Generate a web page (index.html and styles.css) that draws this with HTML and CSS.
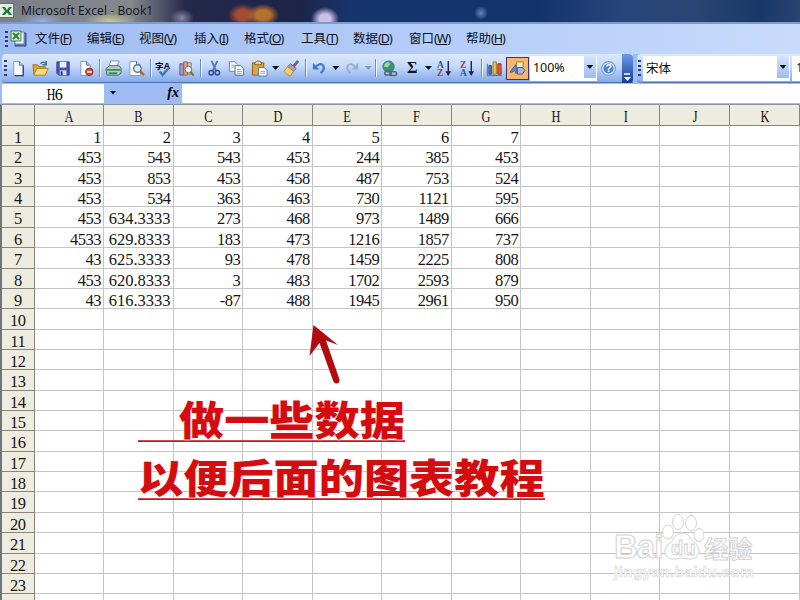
FILE: index.html
```
<!DOCTYPE html>
<html lang="zh-CN">
<head>
  <meta charset="UTF-8">
  <title>Microsoft Excel - Book1</title>
  <link rel="stylesheet" href="styles.css">
</head>
<body>
  <div class="window">
    <div class="titlebar">
      <svg class="app-icon" width="14" height="15" viewBox="0 0 14 15"><rect x="-2" y=".5" width="15.5" height="14" fill="#e4eee0" stroke="#4f8250"/><path d="M2 4h3l2 3 2-3h3L9 8l3 4H9L7 9.500l-2 2.500H2l3-4z" fill="#24773a"/></svg>
      <span>Microsoft Excel - Book1</span>
    </div>

    <div class="menubar">
      <i class="grip"></i>
      <svg width="18" height="18" viewBox="0 0 18 18"><path d="M6 3h10v13H5z" fill="#5b7fb5" stroke="#284a83"/><path d="M5 2h9v12H5z" fill="#fff" stroke="#6380ad"/><path d="M1 1h10v10H1z" fill="#d8ecd4" stroke="#42774a"/><path d="M3 3l6 6M9 3L3 9" stroke="#25803a" stroke-width="2"/></svg>
      <div class="menus">
        <span>文件<b>(<u>F</u>)</b></span>
        <span>编辑<b>(<u>E</u>)</b></span>
        <span>视图<b>(<u>V</u>)</b></span>
        <span>插入<b>(<u>I</u>)</b></span>
        <span>格式<b>(<u>O</u>)</b></span>
        <span>工具<b>(<u>T</u>)</b></span>
        <span>数据<b>(<u>D</u>)</b></span>
        <span>窗口<b>(<u>W</u>)</b></span>
        <span>帮助<b>(<u>H</u>)</b></span>
      </div>
    </div>

    <div class="toolbars">
      <div class="toolbar standard">
        <i class="grip"></i>
        <!-- new, open, save, permission -->
        <span class="btn"><svg viewBox="0 0 18 18"><path d="M4 1.500h6l4 4v11H4z" fill="#fff" stroke="#7d93bd"/><path d="M14 5.500v11H5" fill="none" stroke="#27406f" stroke-width="1.300"/><path d="M10 1.500v4h4" fill="#c5d3ea" stroke="#50688f"/></svg></span>
        <span class="btn"><svg viewBox="0 0 18 18"><path d="M1 5h5l1 2h7v8H2z" fill="#d9a63a" stroke="#9b7227"/><path d="M2 16l3-7h12l-3 7z" fill="#ffdc78" stroke="#b38428"/><path d="M9 4q3-3 6 0m0-3v4h-4" fill="none" stroke="#336fa5" stroke-width="1.500"/></svg></span>
        <span class="btn"><svg viewBox="0 0 18 18"><path d="M2 2h13v14H4l-2-2z" fill="#4854b5" stroke="#303986"/><path d="M5 2h7v6H5z" fill="#e9effb"/><path d="M5 11h7v5H5z" fill="#d7dced"/><path d="M6 12h2v4H6z" fill="#252d6a"/></svg></span>
        <span class="btn"><svg viewBox="0 0 18 18"><path d="M3 1.500h6l4 4v11H3z" fill="#fff" stroke="#7d93bd"/><path d="M9 1.500v4h4" fill="#c5d3ea" stroke="#50688f"/><circle cx="12" cy="12.500" r="4" fill="#d5452f" stroke="#a12d1d"/><path d="M9.500 12.500h5" stroke="#fff" stroke-width="2"/></svg></span>
        <i class="sep"></i>
        <!-- print, preview -->
        <span class="btn"><svg viewBox="0 0 18 18"><path d="M6 1h9l-3 7H4z" fill="#fff" stroke="#768bab"/><path d="M1 9l4-3h10l2 3v5l-3 2H2z" fill="#b7c9ca" stroke="#50665e"/><path d="M1.500 10.500h15M4 14h9" stroke="#3c9251" stroke-width="2"/></svg></span>
        <span class="btn"><svg viewBox="0 0 18 18"><path d="M2 1.500h7l4 4v11H2z" fill="#fff" stroke="#7d93bd"/><path d="M9 1.500v4h4" fill="#c5d3ea" stroke="#50688f"/><circle cx="10" cy="9" r="4" fill="#d7eef6" stroke="#5c7488" stroke-width="1.400"/><path d="M13 12l4 4" stroke="#a66a35" stroke-width="2.500"/></svg></span>
        <i class="sep"></i>
        <!-- spelling, research -->
        <span class="btn"><svg viewBox="0 0 18 18"><text x="0" y="9" class="glyph-zi">字</text><text x="9" y="10" class="glyph-a">A</text><path d="M5 12l3 4 6-7" fill="none" stroke="#3e78c5" stroke-width="2.500"/></svg></span>
        <span class="btn"><svg viewBox="0 0 18 18"><path d="M2 4h4v12H2z" fill="#a394c8" stroke="#63568e"/><path d="M6 2h4v14H6z" fill="#e2a06b" stroke="#8d6650"/><path d="M10 3h4v12h-4z" fill="#e0c7bc" stroke="#94756d"/><circle cx="11" cy="10" r="3.500" fill="#e8f5f8" stroke="#67727b"/><path d="M13.500 12.500l3 4" stroke="#94652e" stroke-width="2.200"/></svg></span>
        <i class="sep"></i>
        <!-- cut, copy, paste -->
        <span class="btn"><svg viewBox="0 0 18 18"><path d="M6 1l5 11M12 1L7 12" stroke="#5478af" stroke-width="2"/><circle cx="5.500" cy="13.500" r="2.300" fill="none" stroke="#294f92" stroke-width="1.600"/><circle cx="12" cy="13.500" r="2.300" fill="none" stroke="#294f92" stroke-width="1.600"/></svg></span>
        <span class="btn"><svg viewBox="0 0 18 18"><path d="M1.500 2h6l3 3v7h-9z" fill="#fff" stroke="#5e80bb"/><path d="M7.500 6h6l3 3v7h-9z" fill="#fff" stroke="#4569a9"/><path d="M3.500 5.500h4m-4 2h3m3 2.500h4m-4 2h5m-5 2h5" stroke="#7f9ed0"/></svg></span>
        <span class="btn"><svg viewBox="0 0 18 18"><path d="M1.500 3h12v13h-12z" fill="#e0a437" stroke="#89601c"/><path d="M4 3q3.500-4 7 0v2H4z" fill="#e8d59b" stroke="#78622d"/><path d="M8 8h6l3 3v6H8z" fill="#fff" stroke="#5875a7"/><path d="M10 12h5m-5 2h5" stroke="#7f9ed0"/></svg></span>
        <i class="drop"></i>
        <span class="btn"><svg viewBox="0 0 18 18"><path d="M16 1l-5 6" stroke="#705f88" stroke-width="3"/><path d="M8 4l6 5-3 3-6-5z" fill="#a5a3b6" stroke="#6d6970"/><path d="M5 7l6 5-3 5q-4-1-7-5z" fill="#f5ce64" stroke="#b48835"/></svg></span>
        <i class="sep"></i>
        <!-- undo, redo -->
        <span class="btn"><svg viewBox="0 0 18 18"><path d="M4 8q6-6 9-2 2 4-3 8" fill="none" stroke="#4279cd" stroke-width="2.400"/><path d="M2 3v7h7z" fill="#4279cd"/></svg></span>
        <i class="drop"></i>
        <span class="btn"><svg viewBox="0 0 18 18"><path d="M13 8Q7 2 4 6q-2 4 3 8" fill="none" stroke="#99afd0" stroke-width="2"/><path d="M15 3v7H8z" fill="#99afd0"/></svg></span>
        <i class="drop off"></i>
        <i class="sep"></i>
        <!-- hyperlink, sum, sort -->
        <span class="btn"><svg viewBox="0 0 18 18"><circle cx="8" cy="7" r="6" fill="#3c9170" stroke="#397c82"/><path d="M4 4q3-3 6 0l-3 4-4-1z" fill="#9ad8a1"/><g fill="none" stroke="#56657e" stroke-width="1.600"><rect x="4" y="12" width="7" height="4" rx="2"/><rect x="9.500" y="12.500" width="7" height="4" rx="2"/></g></svg></span>
        <span class="btn sigma">Σ</span>
        <i class="drop"></i>
        <span class="btn"><svg viewBox="0 0 18 18"><text x="1" y="8" class="sort a">A</text><text x="1" y="17" class="sort z">Z</text><path d="M13 1v14" stroke="#1c2440" stroke-width="1.500"/><path d="M10 12h6l-3 5z" fill="#1c2440"/></svg></span>
        <span class="btn"><svg viewBox="0 0 18 18"><text x="1" y="8" class="sort z">Z</text><text x="1" y="17" class="sort a">A</text><path d="M13 1v14" stroke="#1c2440" stroke-width="1.500"/><path d="M10 12h6l-3 5z" fill="#1c2440"/></svg></span>
        <i class="sep"></i>
        <!-- chart, drawing -->
        <span class="btn"><svg viewBox="0 0 18 18"><path d="M1.500 4v12.500H17" fill="none" stroke="#526999"/><path d="M3 6h3v9H3z" fill="#4b74bd" stroke="#30538d"/><path d="M7.500 2h3.500v13H7.500z" fill="#f3be40" stroke="#a87924"/><path d="M12.500 4H16v11h-3.500z" fill="#d65a3d" stroke="#9a3428"/></svg></span>
        <span class="btn active"><svg viewBox="0 0 18 18"><path d="M8 2h7v6H8z" fill="#e9e8bd" stroke="#8c8050"/><path d="M1 13l6-8 2 9H7l-1-3-3 2z" fill="#6d86c7" stroke="#465d97"/><path d="M9 8h5l3 3-3 4H9z" fill="#a3b4df" stroke="#505d8c"/></svg></span>
        <span class="combo zoom">100%<em><i class="drop"></i></em></span>
        <span class="btn help"><svg viewBox="0 0 18 18"><circle cx="9" cy="9" r="6.500" fill="#d8e8ff" stroke="#6f9bd6"/><circle cx="9" cy="9" r="4.800" fill="#4d84cf"/><text x="6.200" y="12.600" class="question">?</text></svg></span>
        <span class="more"><svg width="9" height="9" viewBox="0 0 9 9"><path d="M1 1h6" stroke="#fff" stroke-width="1.500"/><path d="M1 4h7L4.500 8z" fill="#fff"/></svg></span>
      </div>
      <div class="toolbar format">
        <i class="grip"></i>
        <span class="combo font">宋体<em><i class="drop"></i></em></span>
        <span class="combo size">1</span>
      </div>
    </div>

    <div class="formula-bar">
      <span class="name-box"><span class="narrow">H</span>6</span>
      <span class="fx-area"><i class="drop"></i><b>fx</b></span>
      <span class="formula"></span>
    </div>

    <div class="sheet" id="sheet"></div>
  </div>

  <svg class="arrow" width="40" height="65" viewBox="0 0 40 65"><path d="M7.500 2L32 22l-12-4.500 13.500 39q.5 4-3 4-2.500 0-3.500-3L13.500 20l-10 13z" fill="#b00c10"/></svg>
  <div class="caption">
    <div><span class="first">做一些数据</span></div>
    <div><span>以便后面的图表教程</span></div>
  </div>

  <div class="watermark">
    <div class="brand"><span class="bai">Bai</span><svg width="42" height="48" viewBox="0 0 42 48"><g fill="#fff" stroke="#d2d2d2"><ellipse cx="6" cy="18" rx="5.500" ry="7"/><ellipse cx="16" cy="8" rx="5.500" ry="7.500"/><ellipse cx="29" cy="9" rx="5.500" ry="7.500"/><ellipse cx="37" cy="21" rx="5" ry="6.500"/><path d="M20 19q6 0 9 6 9 7 8 13-2 8-10 7-7-2-14 0Q5 46 3 39q-1-6 7-12 4-8 10-8z"/></g><text x="9" y="41" class="du">du</text></svg><span class="jy">经验</span></div>
    <div class="site">jingyan.baidu.com</div>
  </div>

  <script>
    const columns = ['A', 'B', 'C', 'D', 'E', 'F', 'G', 'H', 'I', 'J', 'K'];
    const data = [
      [1, 2, 3, 4, 5, 6, 7],
      [453, 543, 543, 453, 244, 385, 453],
      [453, 853, 453, 458, 487, 753, 524],
      [453, 534, 363, 463, 730, 1121, 595],
      [453, 634.3333, 273, 468, 973, 1489, 666],
      [4533, 629.8333, 183, 473, 1216, 1857, 737],
      [43, 625.3333, 93, 478, 1459, 2225, 808],
      [453, 620.8333, 3, 483, 1702, 2593, 879],
      [43, 616.3333, -87, 488, 1945, 2961, 950]
    ];

    let html = '<div class="head"></div>';
    columns.forEach(c => html += '<div class="head"><span class="narrow">' + c + '</span></div>');
    for (let r = 0; r < 24; r++) {
      html += '<div class="head row">' + (r < 23 ? r + 1 : '') + '</div>';
      for (let c = 0; c < columns.length; c++) {
        const value = data[r] && data[r][c] !== undefined ? data[r][c] : '';
        const cls = value % 1 ? 'cell decimal' : 'cell';
        html += '<div class="' + cls + '">' + value + '</div>';
      }
    }
    document.getElementById('sheet').innerHTML = html;
  </script>
</body>
</html>
```
FILE: styles.css
```
* {
  box-sizing: border-box;
}
body {
  margin: 0;
  width: 800px;
  height: 600px;
  overflow: hidden;
  position: relative;
  background: #fff;
  font-family: "Noto Sans", "Noto Sans CJK SC", sans-serif;
}
i, em {
  font-style: normal;
}
.window {
  height: 600px;
  overflow: hidden;
}

/* title bar */
.titlebar {
  display: flex;
  align-items: center;
  gap: 7px;
  height: 24px;
  padding-bottom: 1px;
  font: 12px "Open Sans", sans-serif;
  letter-spacing: 0.1px;
  color: #10131c;
  border-bottom: 2px solid #7f9cc9;
  background:
    radial-gradient(ellipse 14px 12px at 325px 19px, #cdbfe8 40%, transparent),
    radial-gradient(ellipse 12px 9px at 182px 18px, #8983a6, transparent),
    radial-gradient(ellipse 16px 11px at 263px 15px, #b5702c 45%, transparent),
    radial-gradient(ellipse 15px 11px at 243px 15px, #a44c32 45%, transparent),
    radial-gradient(ellipse 7px 7px at 481px 13px, #6585bd, transparent),
    radial-gradient(ellipse 26px 8px at 110px 21px, #c9c88e, transparent),
    radial-gradient(ellipse 22px 8px at 42px 21px, #9aa9df, transparent),
    linear-gradient(90deg, #7b8087, #85888d 130px, #565a6c 158px, #25294a 185px, #1d2447 300px, #17356c 350px, #14336d 540px, #28457a 620px, #2a4472 700px, #183768 760px, #2a4370);
}

/* menu */
.menubar {
  display: flex;
  align-items: center;
  height: 30px;
  padding-left: 5px;
  background: linear-gradient(90deg, #9ebcf3, #b2cbf8 50%, #c8dbfb);
}
.grip {
  flex: none;
  width: 3px;
  height: 16px;
  background: repeating-linear-gradient(#27406f 0 2px, transparent 2px 4.700px);
}
.menubar .grip {
  margin-right: 2px;
}
.menus {
  display: grid;
  grid-template-columns: 52px 52px 55px 50px 57px 52px 56px 57px 42px;
  margin-left: 7px;
  font-size: 12.500px;
  line-height: 20px;
  color: #0b1120;
  white-space: nowrap;
}
.menus b {
  font-weight: normal;
  font-size: 12.500px;
  letter-spacing: -1px;
}
.menus u {
  text-underline-offset: 1px;
}

/* toolbars */
.toolbars {
  display: flex;
  height: 29px;
  padding-left: 2px;
  background: #9ebcf3;
}
.toolbar {
  display: flex;
  align-items: center;
  border-bottom: 1px solid #4c77bd;
  background: linear-gradient(#dce9fd, #c3d8fb 45%, #85aae9);
}
.standard {
  width: 631px;
  padding-left: 2px;
  border-radius: 4px 0 0 4px;
}
.format {
  flex: 1;
  min-width: 0;
  margin-left: 4px;
  padding-left: 1px;
  border-radius: 4px 0 0 4px;
  overflow: hidden;
}
.btn {
  flex: none;
  display: flex;
  align-items: center;
  justify-content: center;
  width: 22.600px;
  height: 23px;
}
.btn svg {
  width: 17px;
  height: 17px;
}
.btn.active {
  background: #f8b56c;
  border: 1px solid #3b3770;
}
.btn.help {
  width: 24px;
}
.btn.help svg {
  width: 19px;
  height: 19px;
}
.sep {
  flex: none;
  width: 1px;
  height: 18px;
  margin: 0 2px;
  background: #6b8dc8;
  box-shadow: 1px 0 #f2f7ff;
}
.drop {
  flex: none;
  width: 7px;
  height: 4px;
  margin: 0 1.500px;
  background: #0b1120;
  clip-path: polygon(0 0, 100% 0, 50% 100%);
}
.drop.off {
  background: #8098bf;
}
.sigma {
  font: bold 16px "Liberation Serif", serif;
  color: #101522;
}
.glyph-zi {
  font: bold 9px "Noto Sans CJK SC", sans-serif;
}
.glyph-a {
  font: bold 10px "Liberation Sans", sans-serif;
}
.sort {
  font: bold 10px "Liberation Serif", serif;
}
.sort.a {
  fill: #2f569c;
}
.sort.z {
  fill: #a23a49;
}
.question {
  font: bold 10px "Liberation Sans", sans-serif;
  fill: #fff;
}
.combo {
  flex: none;
  display: flex;
  align-items: center;
  justify-content: space-between;
  height: 25px;
  padding: 0 1px 2px 3px;
  background: #fff;
  font-size: 12.500px;
  color: #111;
}
.combo em {
  display: flex;
  align-items: center;
  justify-content: center;
  width: 12px;
  height: 22px;
  background: linear-gradient(#d5e4fc, #9dbcf0);
}
.zoom {
  width: 67px;
  margin-left: 1px;
}
.font {
  width: 147px;
  margin-left: 2px;
}
.size {
  width: 12px;
  margin-left: 2px;
  padding-left: 4px;
}
.more {
  display: flex;
  align-items: flex-end;
  justify-content: center;
  width: 11px;
  height: 29px;
  margin: 0 0 -1px auto;
  padding-bottom: 1px;
  background: linear-gradient(#6d9be8, #123f91);
  border-radius: 0 4px 4px 0;
}

/* formula bar */
.formula-bar {
  display: flex;
  height: 22px;
  padding: 1px 0 1px 2px;
  background: #9ebcf3;
  border-bottom: 1px solid #8a94a8;
}
.name-box {
  width: 102px;
  background: #fff;
  font: 16px/22px "Liberation Serif", serif;
  letter-spacing: -1px;
  text-align: center;
}
.narrow {
  display: inline-block;
  transform: scaleX(0.750);
}
.name-box .narrow {
  transform-origin: right;
}
.fx-area {
  display: flex;
  align-items: center;
  justify-content: space-between;
  width: 78px;
  padding: 0 3px 2px 4px;
}
.fx-area b {
  font: italic bold 14px "Liberation Serif", serif;
}
.formula {
  flex: 1;
  background: #fff;
}

/* sheet */
.sheet {
  display: grid;
  grid-template-columns: 32.500px repeat(11, 69.550px);
  grid-template-rows: 21px;
  grid-auto-rows: 20.360px;
  width: 800px;
  border-left: 2px solid #70747c;
  font: 16.500px/24px "Liberation Serif", serif;
  letter-spacing: -0.5px;
  color: #161616;
}
.head {
  background: #eeebdf;
  border-right: 1px solid #85847d;
  border-bottom: 1px solid #85847d;
  text-align: center;
}
.row {
  line-height: 24px;
}
.cell {
  padding-right: 2px;
  border-right: 1px solid #c4c4c4;
  border-bottom: 1px solid #c4c4c4;
  text-align: right;
}
.decimal {
  letter-spacing: 0;
}

/* annotation over the sheet */
.arrow {
  position: absolute;
  left: 306px;
  top: 323px;
}
.caption {
  position: absolute;
  left: 138px;
  top: 400px;
  font: 900 45.200px/30px "Noto Sans CJK SC", sans-serif;
  color: #d40c10;
  white-space: nowrap;
  text-shadow: 0 0 2px #fff, 0 0 2px #ffd0d0;
}
.caption div {
  height: 58px;
}
.caption span {
  display: inline-block;
  height: 42px;
  border-bottom: 2px solid #c41418;
  transform: scaleY(0.880);
  transform-origin: bottom;
}
.caption .first {
  padding-left: 41px;
}

.watermark {
  position: absolute;
  left: 614px;
  top: 514px;
  width: 150px;
  color: #fff;
  -webkit-text-stroke: 1px #d2d2d2;
}
.brand {
  display: flex;
  align-items: flex-end;
  height: 48px;
}
.bai {
  font: bold 33px/33px "Liberation Sans", sans-serif;
  letter-spacing: -1px;
  height: 32px;
}
.du {
  font: bold 20px "Liberation Sans", sans-serif;
  fill: #fff;
  stroke: #d2d2d2;
}
.jy {
  font: bold 24px/28px "Noto Sans CJK SC", sans-serif;
}
.site {
  font: bold 15px/18px "Liberation Sans", sans-serif;
  letter-spacing: 0.500px;
  margin-top: 1px;
  -webkit-text-stroke: 0.600px #d2d2d2;
}
```
